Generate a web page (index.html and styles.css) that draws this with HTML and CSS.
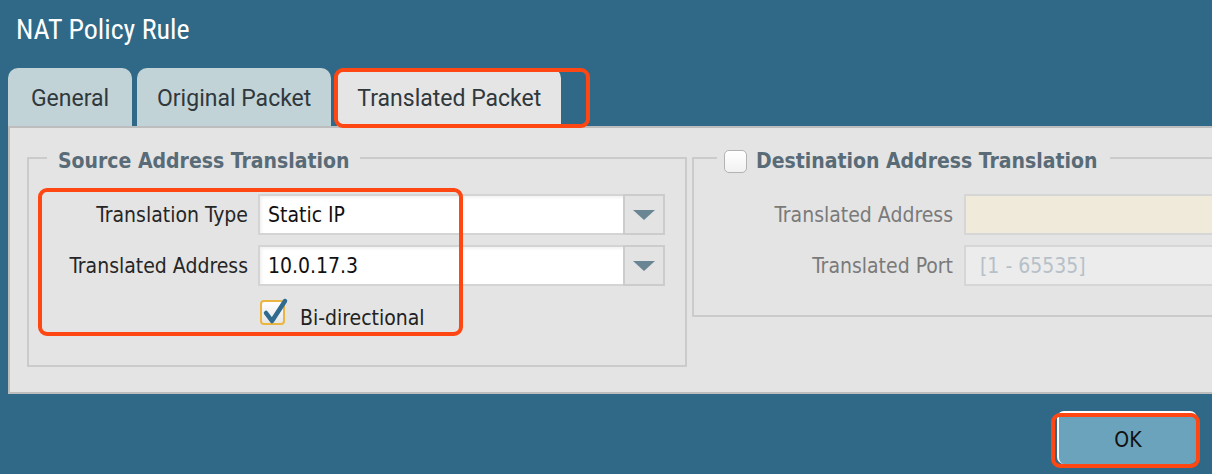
FILE: index.html
```html
<!DOCTYPE html>
<html lang="en">
<head>
<meta charset="utf-8">
<title>NAT Policy Rule</title>
<link rel="stylesheet" href="styles.css">
</head>
<body>
<div class="titlebar">NAT Policy Rule</div>
<div class="tabs">
  <div class="tab">General</div>
  <div class="tab">Original Packet</div>
  <div class="tab active">Translated Packet<span class="hl hl-tab"></span></div>
</div>
<div class="panel">
  <fieldset class="group group-src">
    <legend class="legend legend-src">Source Address Translation</legend>
    <div class="form form-src">
      <span class="hl hl-form"></span>
      <label class="lbl">Translation Type</label>
      <div class="combo"><div class="combo-text">Static IP</div><div class="combo-btn"><span class="arrow"></span></div></div>
      <label class="lbl">Translated Address</label>
      <div class="combo"><div class="combo-text">10.0.17.3</div><div class="combo-btn"><span class="arrow"></span></div></div>
      <div></div>
      <div class="check-row">
        <svg class="check-icon" width="30" height="30" viewBox="0 0 30 30">
          <defs>
            <linearGradient id="cbg" x1="0" y1="0" x2="0" y2="1">
              <stop offset="0" stop-color="#ffffff"/>
              <stop offset="1" stop-color="#e6e6e6"/>
            </linearGradient>
          </defs>
          <rect x="2" y="4" width="23" height="23" rx="3" fill="url(#cbg)" stroke="#ecb540" stroke-width="2"/>
          <polyline points="7,16 13,24 26,4" fill="none" stroke="#2f6b8f" stroke-width="4.5" stroke-linecap="round" stroke-linejoin="round"/>
        </svg>
        <span class="check-label">Bi-directional</span>
      </div>
    </div>
  </fieldset>
  <fieldset class="group group-dst">
    <legend class="legend legend-dst"><span class="cb"></span>Destination Address Translation</legend>
    <div class="form form-dst">
      <label class="lbl lbl-dis">Translated Address</label>
      <div class="field field-addr"></div>
      <label class="lbl lbl-dis">Translated Port</label>
      <div class="field field-port">[1 - 65535]</div>
    </div>
  </fieldset>
</div>
<div class="footer">
  <div class="ok-wrap"><button class="ok">OK</button><span class="hl hl-ok"></span></div>
</div>
</body>
</html>
```
FILE: styles.css
```css
html, body {
  margin: 0;
  padding: 0;
}
body {
  width: 1212px;
  height: 474px;
  overflow: hidden;
  background: #306987;
  font-family: "DejaVu Sans Condensed", "DejaVu Sans", sans-serif;
  color: #222;
}
.titlebar {
  box-sizing: border-box;
  height: 68px;
  padding: 14px 0 0 16px;
  font-family: "Liberation Sans Narrow", "Roboto Condensed", Roboto, sans-serif;
  font-size: 28px;
  line-height: 32px;
  color: #ffffff;
}
.tabs {
  display: flex;
  margin-left: 8px;
  height: 58px;
}
.tab {
  position: relative;
  box-sizing: border-box;
  min-width: 124px;
  height: 58px;
  padding: 4px 20px 0 20px;
  margin-right: 5px;
  border-radius: 10px 10px 0 0;
  background: #c2d3d7;
  color: #30383c;
  font-family: Roboto, sans-serif;
  font-size: 23px;
  line-height: 54px;
  text-align: center;
  white-space: nowrap;
}
.tab.active {
  background: #e5e5e5;
  margin-left: 1px;
}
.hl {
  position: absolute;
  box-sizing: border-box;
  border: 4px solid #fe4712;
  border-radius: 9px;
  pointer-events: none;
}
.hl-tab {
  top: 0;
  left: -3px;
  right: -29px;
  bottom: -2px;
}
.panel {
  box-sizing: border-box;
  display: flex;
  align-items: flex-start;
  margin-left: 8px;
  width: 1400px;
  height: 268px;
  padding: 15px 0 0 17px;
  background: #e4e4e4;
  border-top: 2px solid #bdbdbd;
  border-left: 2px solid #bdbdbd;
  border-bottom: 2px solid #bdbdbd;
}
.group {
  box-sizing: border-box;
  margin: 0;
  min-width: 0;
  border: 2px solid #cbcbcb;
  padding: 21px 0 0 0;
}
.group-src {
  width: 660px;
  padding-bottom: 43px;
}
.group-dst {
  width: 700px;
  margin-left: 5px;
  padding-bottom: 29px;
}
.legend {
  font-weight: bold;
  font-size: 21px;
  line-height: 24px;
  color: #586b77;
  white-space: nowrap;
}
.legend-src {
  margin-left: 18px;
  padding: 6px 11px 0 11px;
}
.legend-dst {
  display: flex;
  align-items: center;
  margin-left: 23px;
  padding: 6px 13px 0 7px;
}
.cb {
  box-sizing: border-box;
  width: 23px;
  height: 23px;
  margin-right: 9px;
  border: 1px solid #b3b3b3;
  border-radius: 5px;
  background: linear-gradient(#ffffff, #f1f1f1);
}
.form {
  position: relative;
  display: grid;
  align-items: center;
}
.form-src {
  grid-template-columns: 219px 407px;
  grid-template-rows: 41px 41px 26px;
  column-gap: 10px;
  row-gap: 10px;
}
.form-dst {
  grid-template-columns: 259px 400px;
  grid-template-rows: 41px 41px;
  column-gap: 11px;
  row-gap: 10px;
}
.hl-form {
  top: -6px;
  left: 9px;
  width: 425px;
  height: 148px;
}
.lbl {
  text-align: right;
  font-size: 21px;
  line-height: 24px;
  color: #262626;
  white-space: nowrap;
  padding-top: 1px;
}
.lbl-dis {
  color: #7a7a7a;
}
.combo {
  display: flex;
  height: 41px;
}
.combo-text {
  box-sizing: border-box;
  flex: 1;
  height: 41px;
  padding: 0 0 0 8px;
  border: 2px solid #d4d4d4;
  border-right: 0;
  background: #ffffff;
  box-shadow: inset 2px 2px 3px rgba(0, 0, 0, 0.05);
  font-size: 21px;
  line-height: 39px;
  color: #111;
}
.combo-btn {
  box-sizing: border-box;
  width: 42px;
  height: 41px;
  border: 2px solid #cccccc;
  background: #e3e3e3;
  display: flex;
  align-items: center;
  justify-content: center;
}
.arrow {
  width: 0;
  height: 0;
  margin-top: 1px;
  border-left: 11px solid transparent;
  border-right: 11px solid transparent;
  border-top: 10px solid #6a8594;
}
.check-row {
  display: flex;
  align-items: center;
  margin-top: 10px;
  height: 26px;
}
.check-icon {
  display: block;
  margin-left: 1px;
  margin-top: -4px;
}
.check-label {
  margin-left: 11px;
  font-size: 21px;
  line-height: 24px;
  color: #222;
  padding-top: 7px;
}
.field {
  box-sizing: border-box;
  height: 41px;
  border: 2px solid #d6d6d6;
  font-size: 21px;
  line-height: 39px;
  padding-left: 14px;
}
.field-addr {
  background: #f0eadb;
}
.field-port {
  background: #ececec;
  color: #b6c0c8;
}
.footer {
  display: flex;
  justify-content: flex-end;
  height: 80px;
  padding-right: 15px;
}
.ok-wrap {
  position: relative;
  margin-top: 17px;
  height: 54px;
}
.ok {
  box-sizing: border-box;
  width: 140px;
  height: 53px;
  margin: 0;
  padding: 2px 0 0 0;
  border: 0;
  border-top: 2px solid #ffffff;
  border-left: 2px solid #ffffff;
  border-radius: 7px;
  background: #6aa3bb;
  font-family: "DejaVu Sans Condensed", "DejaVu Sans", sans-serif;
  font-size: 21px;
  color: #111;
}
.hl-ok {
  top: 2px;
  left: -6px;
  right: -3px;
  bottom: -3px;
}
```
